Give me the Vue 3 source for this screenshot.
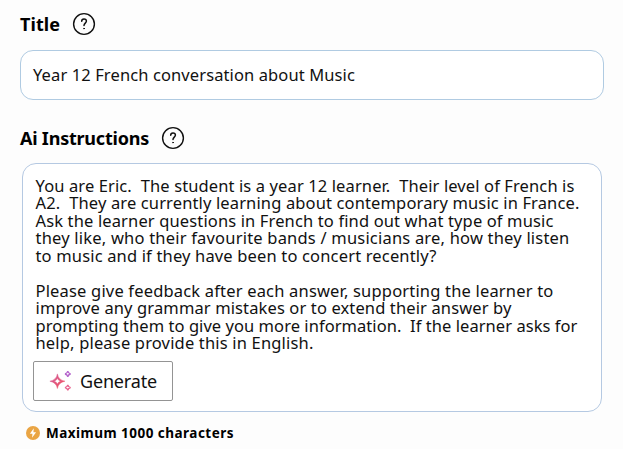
<template>
  <main class="form">
    <div class="field">
      <div class="field__header">
        <label class="field__label" for="title"><span v-fit="40">Title</span></label>
        <svg class="help" viewBox="0 0 24 24" fill="none" stroke="#111" stroke-linecap="round">
          <circle cx="12" cy="12" r="10.4" stroke-width="1.4" />
          <path d="M9.7 9.2C9.7 7.7 10.6 6.9 12 6.9s2.4.9 2.4 2.2c0 2-2.4 2-2.4 4.4" stroke-width="1.5" />
          <circle cx="12" cy="16.6" r=".4" stroke-width="1" />
        </svg>
      </div>
      <div id="title" class="title-input" role="textbox"><span v-fit="322">{{ title }}</span></div>
    </div>

    <div class="field field--instructions">
      <div class="field__header">
        <label class="field__label" for="instructions"><span v-fit="129">Ai Instructions</span></label>
        <svg class="help" viewBox="0 0 24 24" fill="none" stroke="#111" stroke-linecap="round">
          <circle cx="12" cy="12" r="10.4" stroke-width="1.4" />
          <path d="M9.7 9.2C9.7 7.7 10.6 6.9 12 6.9s2.4.9 2.4 2.2c0 2-2.4 2-2.4 4.4" stroke-width="1.5" />
          <circle cx="12" cy="16.6" r=".4" stroke-width="1" />
        </svg>
      </div>
      <div class="instructions">
        <div id="instructions" class="instructions__text" role="textbox">
          <div v-for="(line, i) in lines" :key="i" class="instructions__line">
            <span v-if="line.text" v-fit="line.width">{{ line.text }}</span>
          </div>
        </div>
        <button class="generate" type="button">
          <svg class="generate__icon" viewBox="0 0 24 24" fill="none" stroke-linejoin="miter">
            <defs>
              <linearGradient id="spark" x1="0" y1="0" x2="1" y2="1">
                <stop offset="0" stop-color="#cf5c9c" />
                <stop offset="1" stop-color="#f4505c" />
              </linearGradient>
            </defs>
            <path d="M8.4 4.9Q9.4 11 15.9 12.2Q9.4 13.4 8.4 19.5Q7.4 13.4 .9 12.2Q7.4 11 8.4 4.9ZM8.4 9.3Q7.6 11.5 5.2 12.2Q7.6 12.9 8.4 15.1Q9.2 12.9 11.6 12.2Q9.2 11.5 8.4 9.3Z" fill="url(#spark)" stroke="url(#spark)" stroke-width=".5" fill-rule="evenodd" />
            <path d="M18.8 2.2Q19.3 4.5 21.6 5Q19.3 5.5 18.8 7.8Q18.3 5.5 16 5Q18.3 4.5 18.8 2.2Z" stroke="#b565cc" stroke-width="1.3" />
            <path d="M18.8 15.8Q19.3 18.1 21.6 18.6Q19.3 19.1 18.8 21.4Q18.3 19.1 16 18.6Q18.3 18.1 18.8 15.8Z" stroke="#e8608c" stroke-width="1.3" />
          </svg>
          <span v-fit="77">Generate</span>
        </button>
      </div>
      <div class="hint">
        <svg class="hint__icon" viewBox="0 0 14 14">
          <circle cx="7" cy="7" r="7" fill="#eaa544" />
          <path d="M7.8 2.3L3.9 7.7H6.5L6 11.7L10.1 6.2H7.4Z" fill="#fff" />
        </svg>
        <span v-fit="188">Maximum 1000 characters</span>
      </div>
    </div>
  </main>
</template>

<script setup>
const title = 'Year 12 French conversation about Music'

const lines = [
  { text: 'You are Eric.  The student is a year 12 learner.  Their level of French is', width: 539 },
  { text: 'A2.  They are currently learning about contemporary music in France.', width: 544 },
  { text: 'Ask the learner questions in French to find out what type of music', width: 518 },
  { text: 'they like, who their favourite bands / musicians are, how they listen', width: 534 },
  { text: 'to music and if they have been to concert recently?', width: 401 },
  { text: '', width: 0 },
  { text: 'Please give feedback after each answer, supporting the learner to', width: 518 },
  { text: 'improve any grammar mistakes or to extend their answer by', width: 476 },
  { text: 'prompting them to give you more information.  If the learner asks for', width: 542 },
  { text: 'help, please provide this in English.', width: 278 },
]

// spreads the letters of a text run evenly over the given width
const vFit = {
  mounted(el, { value }) {
    const natural = el.getBoundingClientRect().width
    el.style.letterSpacing = `${(value - natural) / el.textContent.length}px`
  },
}
</script>

<style>
body {
  background: #fdfdfd;
}
</style>

<style scoped>
.form {
  box-sizing: border-box;
  width: 623px;
  padding: 12px 19px 0 20px;
  font-family: 'Noto Sans', sans-serif;
  color: #111;
}
.form span {
  display: inline-block;
  white-space: pre;
}
.field__header {
  display: flex;
  align-items: center;
  gap: 12px;
  height: 24px;
}
.field__label {
  font-size: 18px;
  font-weight: 700;
  line-height: 24px;
  color: #000;
}
.help {
  width: 24px;
  height: 24px;
}
.title-input {
  box-sizing: border-box;
  display: flex;
  align-items: center;
  height: 50px;
  margin-top: 14px;
  padding: 0 12px 2px;
  border: 1px solid #b0cbe2;
  border-radius: 13px;
  background: #fff;
  font-size: 16.5px;
}
.field--instructions {
  margin-top: 26px;
}
.instructions {
  box-sizing: border-box;
  height: 249px;
  margin: 13px 2px 0;
  padding: 13px 10px 0;
  border: 1px solid #b5c9e2;
  border-radius: 14px;
  background: #fff;
}
.instructions__text {
  padding-left: 2.5px;
}
.instructions__line {
  height: 17.45px;
  font-size: 16.5px;
  line-height: 17.45px;
}
.generate {
  box-sizing: border-box;
  display: flex;
  align-items: center;
  gap: 7px;
  width: 140px;
  height: 40px;
  margin-top: 10px;
  padding: 0 0 0 15px;
  border: 1px solid #949494;
  border-radius: 2px;
  background: #fff;
  color: #111;
  font-family: inherit;
  font-size: 18px;
}
.generate__icon {
  width: 24px;
  height: 24px;
}
.hint {
  display: flex;
  align-items: center;
  gap: 6px;
  height: 16px;
  margin: 13px 0 0 6px;
  color: #000;
  font-size: 13.5px;
  font-weight: 700;
}
.hint__icon {
  width: 14px;
  height: 14px;
}
</style>
